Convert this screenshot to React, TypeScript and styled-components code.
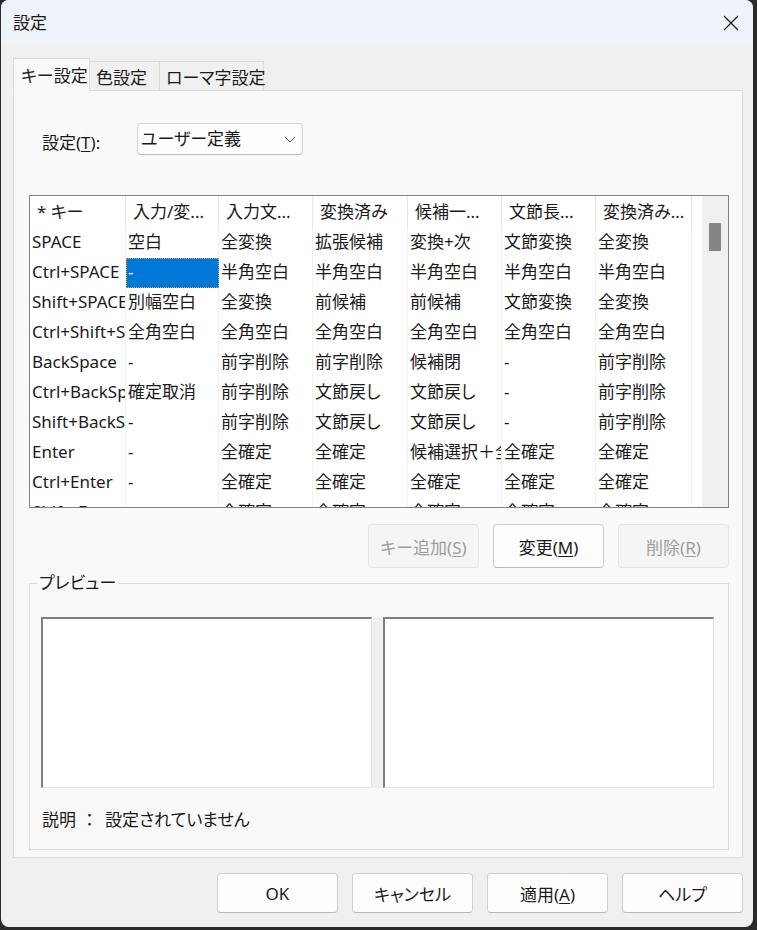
import React from "react";
import styled, { createGlobalStyle } from "styled-components";

const FONT = `"Noto Sans", "Noto Sans CJK JP", sans-serif`;

const GlobalStyle = createGlobalStyle`
  html, body {
    margin: 0;
    padding: 0;
    background: #2b2b2b;
  }
  body {
    font-family: ${FONT};
    font-size: 17px;
    color: #1a1a1a;
    font-feature-settings: "palt" 1;
  }
  * {
    box-sizing: border-box;
  }
`;

const Window = styled.div`
  margin-left: 1px;
  width: 752px;
  height: 927px;
  background: #f0f0f0;
  border-radius: 8px;
  overflow: hidden;
  display: flex;
  flex-direction: column;
`;

const TitleBar = styled.div`
  flex: none;
  height: 45px;
  background: #eef3f9;
  display: flex;
  align-items: center;
  justify-content: space-between;
  padding: 0 14px 0 12px;
`;

const Title = styled.span`
  font-size: 17px;
  line-height: 24px;
`;

const Body = styled.div`
  flex: 1;
  display: flex;
  flex-direction: column;
  padding: 13px 10px 0 12px;
`;

const TabStrip = styled.div`
  position: relative;
  z-index: 1;
  display: flex;
  align-items: flex-end;
  height: 33px;
  margin-bottom: -1px;
`;

const Tab = styled.div<{ $active?: boolean; $w: number }>`
  position: relative;
  z-index: ${(p) => (p.$active ? 2 : 1)};
  width: ${(p) => p.$w}px;
  height: ${(p) => (p.$active ? 33 : 30)}px;
  padding-left: ${(p) => (p.$active ? 7 : 6)}px;
  display: flex;
  align-items: center;
  border: 1px solid #dcdcdc;
  border-bottom-color: ${(p) => (p.$active ? "#f9f9f9" : "#dcdcdc")};
  background: ${(p) => (p.$active ? "#f9f9f9" : "#f0f0f0")};
  white-space: nowrap;
  & + & {
    margin-left: -1px;
  }
`;

const Panel = styled.div`
  height: 768px;
  border: 1px solid #dcdcdc;
  background: #f9f9f9;
  padding: 32px 13px 7px 15px;
  display: flex;
  flex-direction: column;
`;

const SettingRow = styled.div`
  height: 32px;
  display: flex;
  align-items: center;
`;

const FieldLabel = styled.label`
  width: 108px;
  padding-left: 13px;
  margin-top: 7px;
  line-height: 24px;
`;

const Key = styled.u`
  text-underline-offset: 2px;
`;

const Select = styled.div`
  width: 166px;
  height: 32px;
  border: 1px solid #d5d5d5;
  border-bottom-color: #bdbdbd;
  border-radius: 4px;
  background: #fdfdfd;
  padding: 0 6px 0 3px;
  display: flex;
  align-items: center;
  justify-content: space-between;
  line-height: 24px;
`;

const Table = styled.div`
  margin-top: 40px;
  height: 313px;
  border: 1px solid #828282;
  background: #ffffff;
  display: flex;
`;

const ListArea = styled.div`
  flex: 1;
  overflow: hidden;
`;

const HeaderRow = styled.div`
  display: flex;
  height: 32px;
`;

const HeadCell = styled.div<{ $w: number }>`
  flex: none;
  width: ${(p) => p.$w}px;
  padding-left: 7px;
  border-right: 1px solid #e5e5e5;
  line-height: 32px;
  white-space: nowrap;
  overflow: hidden;
`;

const Row = styled.div`
  display: flex;
  height: 30px;
`;

const Cell = styled.div<{ $w: number; $selected?: boolean }>`
  flex: none;
  width: ${(p) => p.$w}px;
  padding-left: 2px;
  line-height: 28px;
  white-space: nowrap;
  overflow: hidden;
  border-right: 1px solid ${(p) => (p.$selected ? "#0078d7" : "#f2f2f2")};
  background: ${(p) => (p.$selected ? "#0078d7" : "transparent")};
  color: ${(p) => (p.$selected ? "#ffffff" : "#1a1a1a")};
  outline: ${(p) => (p.$selected ? "1px dotted #e3a048" : "none")};
  outline-offset: -1px;
`;

const ScrollTrack = styled.div`
  flex: none;
  width: 26px;
  background: #f0f0f0;
  padding: 27px 0 0 7px;
`;

const Thumb = styled.div`
  width: 12px;
  height: 28px;
  background: #858585;
  border-radius: 1px;
`;

const ActionRow = styled.div`
  margin-top: 16px;
  display: flex;
  justify-content: flex-end;
  gap: 14px;
`;

const Button = styled.button<{ $w: number; $h: number }>`
  width: ${(p) => p.$w}px;
  height: ${(p) => p.$h}px;
  border: 1px solid #d0d0d0;
  border-bottom-color: #b9b9b9;
  border-radius: 4px;
  background: #fdfdfd;
  color: #1a1a1a;
  font-family: ${FONT};
  font-size: 17px;
  font-feature-settings: "palt" 1;
  padding: 0;
  &:disabled {
    border-color: #e5e5e5;
    background: #f5f5f5;
    color: #9d9d9d;
  }
`;

const Group = styled.fieldset`
  margin: 3px 0 0 0;
  min-width: 0;
  border: 1px solid #dcdcdc;
  padding: 22px 14px 17px 11px;
`;

const Legend = styled.legend`
  margin-left: -4px;
  padding: 0 2px;
  line-height: 24px;
`;

const PreviewRow = styled.div`
  display: flex;
  height: 171px;
`;

const PreviewBox = styled.div`
  width: 331px;
  background: #ffffff;
  border-top: 2px solid #7f7f7f;
  border-left: 2px solid #7f7f7f;
  border-right: 1px solid #e3e3e3;
  border-bottom: 1px solid #e3e3e3;
`;

const Splitter = styled.div`
  width: 11px;
  background: #efefef;
`;

const Description = styled.div`
  margin-top: 20px;
  padding-left: 1px;
  line-height: 24px;
  display: flex;
`;

const Colon = styled.span`
  font-feature-settings: normal;
  margin: 0 7px 0 5px;
`;

const Footer = styled.div`
  margin-top: 15px;
  display: flex;
  justify-content: flex-end;
  gap: 14px;
`;

const CloseIcon = () => (
  <svg width="16" height="16" viewBox="0 0 16 16">
    <path d="M1 1 L15 15 M15 1 L1 15" stroke="#1b1b1b" strokeWidth="1.2" fill="none" />
  </svg>
);

const Chevron = () => (
  <svg width="12" height="7" viewBox="0 0 12 7">
    <polyline points="1,1 6,6 11,1" stroke="#5d5d5d" strokeWidth="1" fill="none" />
  </svg>
);

const columns = [
  { title: "* キー", w: 96 },
  { title: "入力/変...", w: 93 },
  { title: "入力文...", w: 94 },
  { title: "変換済み", w: 95 },
  { title: "候補一...", w: 94 },
  { title: "文節長...", w: 94 },
  { title: "変換済み...", w: 96 },
];

const rows: string[][] = [
  ["SPACE", "空白", "全変換", "拡張候補", "変換+次", "文節変換", "全変換"],
  ["Ctrl+SPACE", "-", "半角空白", "半角空白", "半角空白", "半角空白", "半角空白"],
  ["Shift+SPACE", "別幅空白", "全変換", "前候補", "前候補", "文節変換", "全変換"],
  ["Ctrl+Shift+SPACE", "全角空白", "全角空白", "全角空白", "全角空白", "全角空白", "全角空白"],
  ["BackSpace", "-", "前字削除", "前字削除", "候補閉", "-", "前字削除"],
  ["Ctrl+BackSpace", "確定取消", "前字削除", "文節戻し", "文節戻し", "-", "前字削除"],
  ["Shift+BackSpace", "-", "前字削除", "文節戻し", "文節戻し", "-", "前字削除"],
  ["Enter", "-", "全確定", "全確定", "候補選択＋全確定", "全確定", "全確定"],
  ["Ctrl+Enter", "-", "全確定", "全確定", "全確定", "全確定", "全確定"],
  ["Shift+Enter", "-", "全確定", "全確定", "全確定", "全確定", "全確定"],
];

// 選択中のセル (行, 列)
const selected = { row: 1, col: 1 };

const App: React.FC = () => {
  return (
    <>
      <GlobalStyle />
      <Window>
        <TitleBar>
          <Title>設定</Title>
          <CloseIcon />
        </TitleBar>
        <Body>
          <TabStrip>
            <Tab $active $w={77}>キー設定</Tab>
            <Tab $w={71}>色設定</Tab>
            <Tab $w={105}>ローマ字設定</Tab>
          </TabStrip>
          <Panel>
            <SettingRow>
              <FieldLabel>
                設定(<Key>T</Key>):
              </FieldLabel>
              <Select>
                <span>ユーザー定義</span>
                <Chevron />
              </Select>
            </SettingRow>

            <Table>
              <ListArea>
                <HeaderRow>
                  {columns.map((c, i) => (
                    <HeadCell key={i} $w={c.w}>
                      {c.title}
                    </HeadCell>
                  ))}
                </HeaderRow>
                {rows.map((r, ri) => (
                  <Row key={ri}>
                    {r.map((v, ci) => (
                      <Cell
                        key={ci}
                        $w={columns[ci].w}
                        $selected={ri === selected.row && ci === selected.col}
                      >
                        {v}
                      </Cell>
                    ))}
                  </Row>
                ))}
              </ListArea>
              <ScrollTrack>
                <Thumb />
              </ScrollTrack>
            </Table>

            <ActionRow>
              <Button $w={111} $h={44} disabled>
                キー追加(<Key>S</Key>)
              </Button>
              <Button $w={111} $h={44}>
                変更(<Key>M</Key>)
              </Button>
              <Button $w={111} $h={44} disabled>
                削除(<Key>R</Key>)
              </Button>
            </ActionRow>

            <Group>
              <Legend>プレビュー</Legend>
              <PreviewRow>
                <PreviewBox />
                <Splitter />
                <PreviewBox />
              </PreviewRow>
              <Description>
                説明<Colon>：</Colon>設定されていません
              </Description>
            </Group>
          </Panel>

          <Footer>
            <Button $w={121} $h={40}>OK</Button>
            <Button $w={121} $h={40}>キャンセル</Button>
            <Button $w={121} $h={40}>
              適用(<Key>A</Key>)
            </Button>
            <Button $w={121} $h={40}>ヘルプ</Button>
          </Footer>
        </Body>
      </Window>
    </>
  );
};

export default App;
